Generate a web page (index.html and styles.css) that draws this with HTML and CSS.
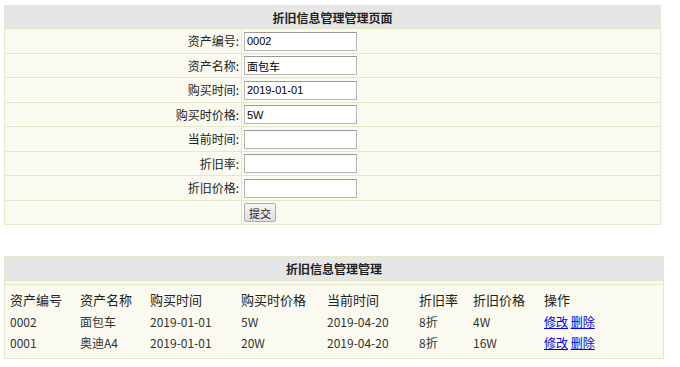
FILE: index.html
```html
<!DOCTYPE html>
<html lang="zh-CN">
<head>
    <meta charset="UTF-8">
    <title>折旧信息管理</title>
    <link rel="stylesheet" href="styles.css">
</head>
<body>
    <form class="edit-form">
        <table class="box form-table">
            <tr>
                <th colspan="2">折旧信息管理管理页面</th>
            </tr>
            <tr>
                <td class="label">资产编号:</td>
                <td><input type="text" value="0002"></td>
            </tr>
            <tr>
                <td class="label">资产名称:</td>
                <td><input type="text" value="面包车"></td>
            </tr>
            <tr>
                <td class="label">购买时间:</td>
                <td><input type="text" value="2019-01-01"></td>
            </tr>
            <tr>
                <td class="label">购买时价格:</td>
                <td><input type="text" value="5W"></td>
            </tr>
            <tr>
                <td class="label">当前时间:</td>
                <td><input type="text"></td>
            </tr>
            <tr>
                <td class="label">折旧率:</td>
                <td><input type="text"></td>
            </tr>
            <tr>
                <td class="label">折旧价格:</td>
                <td><input type="text"></td>
            </tr>
            <tr>
                <td></td>
                <td><button type="submit">提交</button></td>
            </tr>
        </table>
    </form>

    <table class="box list-box">
        <tr>
            <th>折旧信息管理管理</th>
        </tr>
        <tr class="spacer">
            <td></td>
        </tr>
        <tr>
            <td class="list-cell">
                <table class="list">
                    <tr>
                        <td class="c1">资产编号</td>
                        <td class="c2">资产名称</td>
                        <td class="c3">购买时间</td>
                        <td class="c4">购买时价格</td>
                        <td class="c5">当前时间</td>
                        <td class="c6">折旧率</td>
                        <td class="c7">折旧价格</td>
                        <td>操作</td>
                    </tr>
                    <tr>
                        <td>0002</td>
                        <td>面包车</td>
                        <td>2019-01-01</td>
                        <td>5W</td>
                        <td>2019-04-20</td>
                        <td>8折</td>
                        <td>4W</td>
                        <td><a href="#">修改</a> <a href="#">删除</a></td>
                    </tr>
                    <tr>
                        <td>0001</td>
                        <td>奥迪A4</td>
                        <td>2019-01-01</td>
                        <td>20W</td>
                        <td>2019-04-20</td>
                        <td>8折</td>
                        <td>16W</td>
                        <td><a href="#">修改</a> <a href="#">删除</a></td>
                    </tr>
                </table>
            </td>
        </tr>
    </table>
</body>
</html>
```

FILE: styles.css
```css
body {
    margin: 5px 4px;
    font-family: "Noto Sans CJK SC", "Noto Sans", sans-serif;
    font-size: 12px;
    color: #222;
    background: white;
}
.edit-form {
    margin: 0;
}
.box {
    border-collapse: collapse;
    background-color: #fafaf0;
}
.box th,
.box td {
    border: 1px solid #e2e8c8;
}
.box th {
    background-color: #e6e6e6;
    height: 22px;
    padding: 0;
    font-size: 12px;
    font-weight: bold;
    text-align: center;
}
.form-table {
    width: 657px;
}
.form-table td {
    height: 23.5px;
    padding: 0 2px;
}
.form-table .label {
    width: 232px;
    text-align: right;
}
.form-table input {
    width: 113px;
    height: 19px;
    box-sizing: border-box;
    border: 1px solid #b5b5b5;
    border-top-color: #999;
    padding: 1px 2px;
    font-family: "Liberation Sans", Arial, sans-serif;
    font-size: 11px;
    vertical-align: middle;
}
.form-table button {
    height: 19px;
    padding: 0 4px;
    border: 1px solid #adadad;
    border-radius: 2px;
    background: linear-gradient(#f6f6f6, #dedede);
    font-family: "Noto Sans CJK SC", sans-serif;
    font-size: 11px;
    color: #222;
    vertical-align: middle;
}
.list-box {
    width: 660px;
    margin-top: 31px;
}
.list-box th {
    height: 23px;
}
.list-box .spacer td {
    height: 3px;
    padding: 0;
}
.list-cell {
    padding: 4px 0 4px 0;
}
.list {
    border-collapse: collapse;
    color: #333;
}
.list td {
    border: none;
    height: 21.5px;
    padding: 0 0 0 6px;
    white-space: nowrap;
}
.list td:first-child {
    padding-left: 5px;
}
.list tr:first-child td {
    font-size: 13px;
    color: #222;
}
.list .c1 { width: 64px; }
.list .c2 { width: 64px; }
.list .c3 { width: 85px; }
.list .c4 { width: 80px; }
.list .c5 { width: 86px; }
.list .c6 { width: 48px; }
.list .c7 { width: 65px; }
.list a {
    color: #0000ee;
}
```
